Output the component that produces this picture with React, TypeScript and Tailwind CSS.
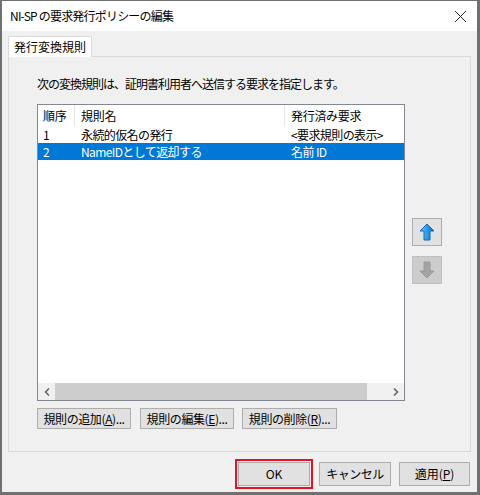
import React from "react";

const font = { fontFamily: '"Noto Sans CJK JP", "Noto Sans", sans-serif' };

const rules = [
  { no: "1", name: "永続的仮名の発行", claim: "<要求規則の表示>", selected: false },
  { no: "2", name: "NameIDとして返却する", claim: "名前 ID", selected: true },
];

const Btn = ({ label, w, className = "" }: { label: React.ReactNode; w: string; className?: string }) => (
  <button
    className={`${w} h-[21px] border border-[#adadad] bg-[#e1e1e1] text-[12px] leading-none text-black flex items-center justify-center ${className}`}
  >
    {label}
  </button>
);

const ArrowBtn = ({ up }: { up?: boolean }) => (
  <div
    className={`w-[30px] h-[28px] border flex items-center justify-center ${
      up ? "border-[#adadad] bg-[#e1e1e1]" : "border-[#bfbfbf] bg-[#cccccc]"
    }`}
  >
    <svg width="16" height="18" viewBox="0 0 16 18">
      <defs>
        <linearGradient id="blueArrow" x1="0" x2="1" y1="0" y2="0">
          <stop offset="0" stopColor="#7cc6f7" />
          <stop offset="0.5" stopColor="#2d9be8" />
          <stop offset="1" stopColor="#0b6fc4" />
        </linearGradient>
      </defs>
      {up ? (
        <path d="M8 1 L15 8 L11 8 L11 17 L5 17 L5 8 L1 8 Z" fill="url(#blueArrow)" stroke="#1566b0" strokeWidth="1" />
      ) : (
        <path d="M8 17 L15 10 L11 10 L11 1 L5 1 L5 10 L1 10 Z" fill="#a3a3a3" stroke="#9a9a9a" strokeWidth="1" />
      )}
    </svg>
  </div>
);

export default function App() {
  return (
    <div style={font} className="w-[480px] h-[495px] flex flex-col bg-[#f0f0f0] border-t border-l-2 border-r-[3px] border-b-[3px] border-[#707070] text-black">
      {/* title bar */}
      <div className="h-[30px] bg-white flex items-center justify-between pl-[8px] pr-[10px]">
        <span className="text-[12px] leading-none tracking-[-0.8px]">NI-SP の要求発行ポリシーの編集</span>
        <svg width="13" height="13" viewBox="0 0 13 13">
          <path d="M1 1 L12 12 M12 1 L1 12" stroke="#222" strokeWidth="1" />
        </svg>
      </div>

      <div className="flex-1 flex flex-col px-[6px]">
        {/* tab */}
        <div className="mt-[5px] flex">
          <div className="h-[21px] px-[5px] border border-b-0 border-[#d9d9d9] bg-white text-[12px] flex items-center -mb-px relative z-10">
            発行変換規則
          </div>
        </div>
        <div className="h-[396px] border border-[#d9d9d9] bg-[#f0f0f0] flex flex-col pl-[28px] pr-[28px]">
          <div className="mt-[19px] text-[12px] leading-[16px] tracking-[-1px]">
            次の変換規則は、証明書利用者へ送信する要求を指定します。
          </div>
          <div className="mt-[12px] flex items-start gap-[7px]">
            {/* list box */}
            <div className="w-[369px] h-[297px] border border-[#828790] bg-white flex flex-col">
              <div className="h-[21px] flex text-[12px] items-center tracking-[-0.3px]">
                <div className="w-[37px] pl-[5px] h-full flex items-center border-r border-[#e5e5e5]">順序</div>
                <div className="w-[210px] pl-[6px] h-full flex items-center border-r border-[#e5e5e5]">規則名</div>
                <div className="flex-1 pl-[6px] h-full flex items-center">発行済み要求</div>
              </div>
              {rules.map((r) => (
                <div
                  key={r.no}
                  className={`h-[17px] flex items-center text-[12px] tracking-[-0.6px] ${r.selected ? "bg-[#0078d7] text-white" : ""}`}
                >
                  <div className="w-[37px] pl-[5px]">{r.no}</div>
                  <div className="w-[210px] pl-[6px]">{r.name}</div>
                  <div className="flex-1 pl-[6px]">{r.claim}</div>
                </div>
              ))}
              <div className="flex-1" />
              {/* horizontal scrollbar */}
              <div className="h-[17px] flex bg-[#f0f0f0]">
                <div className="w-[17px] flex items-center justify-center">
                  <svg width="6" height="8" viewBox="0 0 6 8">
                    <path d="M5 0.5 L1.5 4 L5 7.5" stroke="#606060" strokeWidth="1.5" fill="none" />
                  </svg>
                </div>
                <div className="w-[312px] h-full bg-[#cdcdcd]" />
                <div className="flex-1" />
                <div className="w-[17px] flex items-center justify-center">
                  <svg width="6" height="8" viewBox="0 0 6 8">
                    <path d="M1 0.5 L4.5 4 L1 7.5" stroke="#606060" strokeWidth="1.5" fill="none" />
                  </svg>
                </div>
              </div>
            </div>
            <div className="mt-[114px] flex flex-col gap-[10px]">
              <ArrowBtn up />
              <ArrowBtn />
            </div>
          </div>
          <div className="mt-[7px] flex gap-[9px] tracking-[-0.4px]">
            <Btn w="w-[94px]" label={<span>規則の追加(<u>A</u>)...</span>} />
            <Btn w="w-[94px]" label={<span>規則の編集(<u>E</u>)...</span>} />
            <Btn w="w-[95px]" className="-ml-px" label={<span>規則の削除(<u>R</u>)...</span>} />
          </div>
        </div>

        {/* bottom buttons */}
        <div className="mt-[7px] flex justify-end gap-[5px] pr-[1px]">
          <div className="border-2 border-[#e81123] p-[1px] mr-[1px]">
            <Btn w="w-[72px]" className="h-[24px]" label="OK" />
          </div>
          <div className="flex gap-[8px] pt-[3px]">
            <Btn w="w-[72px]" className="h-[24px] tracking-[-0.5px]" label="キャンセル" />
            <Btn w="w-[71px]" className="h-[24px]" label={<span>適用(<u>P</u>)</span>} />
          </div>
        </div>
      </div>
    </div>
  );
}
